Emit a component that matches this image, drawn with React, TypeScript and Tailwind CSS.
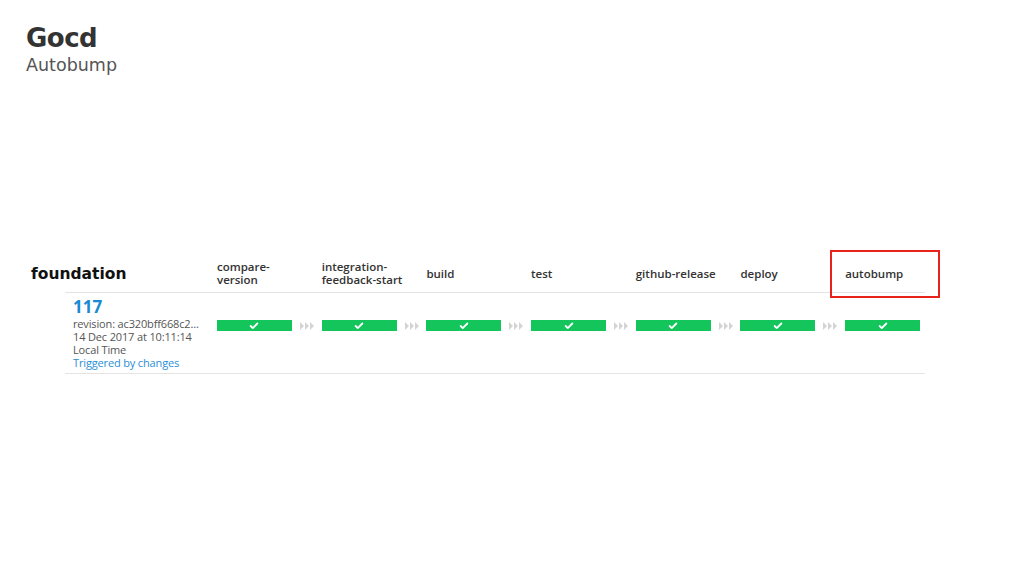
import { Check } from 'lucide-react'

const stages = [
  ['compare-', 'version'],
  ['integration-', 'feedback-start'],
  ['build'],
  ['test'],
  ['github-release'],
  ['deploy'],
  ['autobump'],
]

function Arrows() {
  return (
    <svg width="14" height="8" viewBox="0 0 14 8" className="text-[#d4d4d4]">
      <path d="M0 0 L4 4 L0 8 Z M5 0 L9 4 L5 8 Z M10 0 L14 4 L10 8 Z" fill="currentColor" />
    </svg>
  )
}

export default function App() {
  const table = { fontFamily: '"Open Sans", "Liberation Sans", sans-serif' }
  const heading = { fontFamily: '"DejaVu Sans", "Liberation Sans", sans-serif' }

  return (
    <div className="w-[1024px] h-[576px] bg-white relative overflow-hidden">
      {/* Title */}
      <div className="pl-[26px] pt-[22px]" style={heading}>
        <div className="text-[26px] leading-[32px] font-bold text-[#333] tracking-[-0.5px]">Gocd</div>
        <div className="text-[17.5px] leading-[20px] text-[#555] mt-[1px]">Autobump</div>
      </div>

      {/* Pipeline */}
      <div className="mt-[179px] pl-[31px]" style={table}>
        <div className="flex h-[38px] items-center">
          <div className="w-[181px] pt-[4px] text-[15.5px] font-bold text-[#111]" style={heading}>
            foundation
          </div>
          {stages.map((s, i) => (
            <div
              key={i}
              className={`${i === 6 ? 'w-[85px]' : 'w-[104.7px]'} pl-[5px] text-[11.5px] leading-[13px] font-semibold text-[#333]`}
            >
              {s.map((l) => (
                <div key={l}>{l}</div>
              ))}
            </div>
          ))}
        </div>
        <div className="ml-[34px] w-[860px] h-px bg-[#e4e4e4]" />

        <div className="ml-[34px] w-[860px] flex border-b border-[#e4e4e4] pb-[4px]">
          <div className="w-[147px] pl-[8px] pt-[4px]">
            <div className="text-[17px] leading-[20px] font-bold text-[#1a8bd3]">117</div>
            <div className="text-[11px] leading-[13px] text-[#555] tracking-[-0.15px]">
              revision: ac320bff668c2...
            </div>
            <div className="text-[11px] leading-[13px] text-[#555] tracking-[-0.15px]">
              14 Dec 2017 at 10:11:14
            </div>
            <div className="text-[11px] leading-[13px] text-[#555] tracking-[-0.15px]">Local Time</div>
            <div className="text-[11px] leading-[13px] text-[#2a8fd6] tracking-[-0.15px]">
              Triggered by changes
            </div>
          </div>
          {stages.map((_, i) => (
            <div
              key={i}
              className={`${i === 6 ? 'w-[85px]' : 'w-[104.7px]'} pl-[5px] pt-[27px] flex items-start`}
            >
              <div className="w-[75px] h-[11px] bg-[#13c55a] flex items-center justify-center">
                <Check className="w-[10px] h-[10px] text-white" strokeWidth={4.5} />
              </div>
              {i < 6 && (
                <div className="ml-[8px] mt-[1.5px]">
                  <Arrows />
                </div>
              )}
            </div>
          ))}
        </div>
      </div>

      {/* Highlight */}
      <div className="absolute left-[830px] top-[250px] w-[110px] h-[48px] border-2 border-[#e8231c]" />
    </div>
  )
}
